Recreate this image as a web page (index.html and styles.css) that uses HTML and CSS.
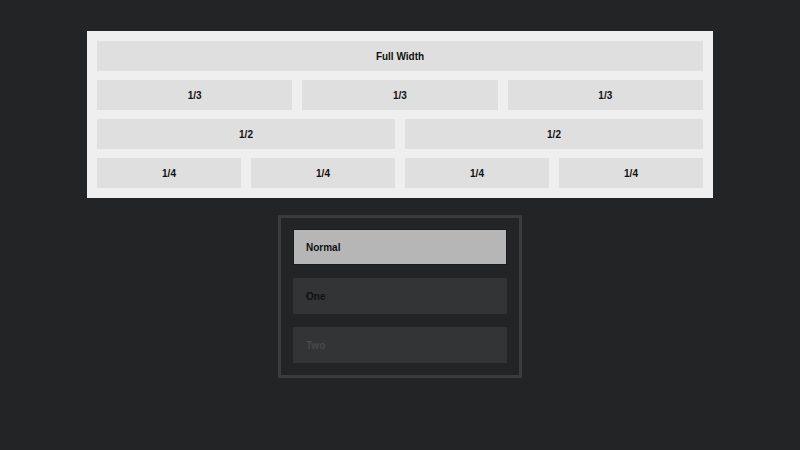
FILE: index.html
```html
<!DOCTYPE html>
<html>
<head>
<meta charset="utf-8">
<link rel="stylesheet" href="styles.css">
</head>
<body>
<div class="page">
  <div class="grid-panel">
    <div class="row"><div class="cell">Full Width</div></div>
    <div class="row"><div class="cell">1/3</div><div class="cell">1/3</div><div class="cell">1/3</div></div>
    <div class="row"><div class="cell">1/2</div><div class="cell">1/2</div></div>
    <div class="row"><div class="cell">1/4</div><div class="cell">1/4</div><div class="cell">1/4</div><div class="cell">1/4</div></div>
  </div>
  <div class="button-box">
    <div class="btn btn-active">Normal</div>
    <div class="btn">One</div>
    <div class="btn btn-disabled">Two</div>
  </div>
</div>
</body>
</html>
```
FILE: styles.css
```css
html, body {
  margin: 0;
  padding: 0;
  background: #232426;
  width: 800px;
  height: 450px;
  overflow: hidden;
  font-family: "Liberation Sans", Arial, sans-serif;
}
.page {
  display: flex;
  flex-direction: column;
  align-items: center;
  padding-top: 31px;
}
.grid-panel {
  width: 606px;
  padding: 10px;
  background: #efefef;
  display: flex;
  flex-direction: column;
  gap: 9px;
}
.row {
  display: flex;
  gap: 10px;
}
.cell {
  flex: 1 1 0;
  height: 30px;
  background: #dfdfdf;
  color: #111;
  font-size: 10px;
  font-weight: bold;
  display: flex;
  align-items: center;
  justify-content: center;
}
.button-box {
  margin-top: 17px;
  width: 214px;
  padding: 11px 12px 12px;
  border: 3px solid #3a3b3d;
  display: flex;
  flex-direction: column;
  gap: 13px;
}
.btn {
  height: 36px;
  box-sizing: border-box;
  background: #333436;
  color: #111;
  font-size: 10px;
  font-weight: bold;
  display: flex;
  align-items: center;
  padding-left: 13px;
}
.btn-active {
  background: #b6b6b6;
  border: 1px solid #1c1c1c;
  padding-left: 12px;
}
.btn-disabled {
  color: #484849;
}
```
